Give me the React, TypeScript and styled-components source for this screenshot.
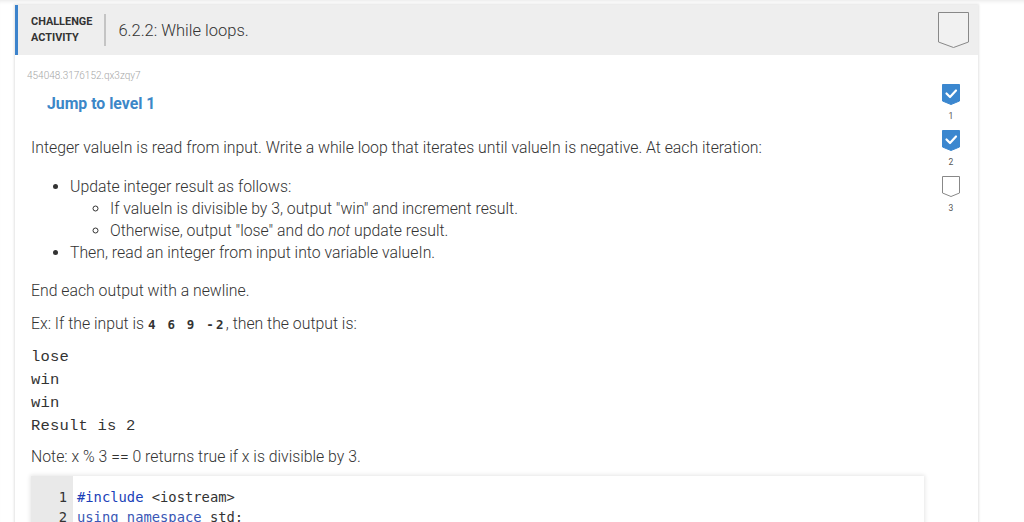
import React from "react";
import styled, { createGlobalStyle } from "styled-components";

const Global = createGlobalStyle`
  html, body { margin: 0; padding: 0; background: #fff; }
  body { font-family: Roboto, "Noto Sans", sans-serif; color: #333; overflow: hidden; }
`;

const Page = styled.div`
  width: 1024px;
  height: 522px;
  overflow: hidden;
  padding: 5px 0 0 15px;
  box-sizing: border-box;
  background: #fff;
  box-shadow: inset 0 4px 4px -3px #e6e6e6;
`;

const Card = styled.section`
  width: 963px;
  background: #fff;
  box-shadow: 0 0 2px 1px #e4e4e4;
`;

const Header = styled.header`
  display: flex;
  align-items: center;
  height: 50px;
  background: #eeeeee;
  border-left: 3px solid #3c83cc;
  padding: 0 9px 0 13px;
`;

const Kind = styled.div`
  font-family: Roboto, sans-serif;
  font-weight: 700;
  font-size: 10.9px;
  line-height: 16px;
  color: #333;
  padding-right: 12px;
  border-right: 2px solid #c4c4c4;
  height: 32px;
  display: flex;
  flex-direction: column;
  justify-content: center;
`;

const Title = styled.h1`
  margin: 0 0 0 12px;
  font-family: Roboto, sans-serif;
  font-weight: 300;
  font-size: 16.5px;
  color: #333;
  flex: 1;
`;

const Body = styled.div`
  display: flex;
`;

const Main = styled.div`
  flex: 1;
  padding: 15px 0 0 12px;
`;

const Sidebar = styled.div`
  width: 56px;
  display: flex;
  flex-direction: column;
  align-items: center;
  padding-top: 29px;
  gap: 8px;
`;

const Level = styled.div`
  display: flex;
  flex-direction: column;
  align-items: center;
  gap: 6px;
`;

const LevelNum = styled.span`
  font-size: 8.5px;
  color: #555;
  line-height: 11px;
`;

const Ident = styled.div`
  font-size: 10px;
  font-weight: 300;
  color: #a6a6a6;
  line-height: 12px;
`;

const Jump = styled.a`
  display: block;
  margin: 13px 0 0 20px;
  font-size: 15.8px;
  font-weight: 700;
  color: #3c87c8;
  line-height: 18px;
`;

const Content = styled.div`
  padding-left: 4px;
  margin-top: 24px;
  font-size: 15.8px;
  font-weight: 300;
  color: #333;
  line-height: 22px;
  width: 893px;
`;

const P = styled.p<{ mb?: number; mt?: number }>`
  margin: ${(p) => p.mt ?? 0}px 0 ${(p) => p.mb ?? 11}px;
`;

const List = styled.ul<{ sub?: boolean }>`
  margin: 0;
  padding-left: ${(p) => (p.sub ? 40 : 39)}px;
  list-style-type: ${(p) => (p.sub ? "circle" : "disc")};
`;

const Item = styled.li`
  line-height: 22px;
`;

const Code = styled.code`
  font-family: "DejaVu Sans Mono", monospace;
  font-weight: 700;
  font-size: 12.5px;
  letter-spacing: 2.2px;
  color: #333;
`;

const Pre = styled.pre`
  margin: 10px 0 8px;
  font-family: "Liberation Mono", "Courier New", monospace;
  font-size: 15.5px;
  line-height: 23px;
  letter-spacing: 0.2px;
  color: #333;
  font-weight: 400;
`;

const Editor = styled.div`
  display: flex;
  margin-top: 8px;
  height: 60px;
  box-shadow: 0 0 4px 1px #e6e6e6;
  font-family: "DejaVu Sans Mono", monospace;
  font-size: 13.8px;
  line-height: 20px;
`;

const Gutter = styled.div`
  width: 42px;
  background: #e9e9e9;
  color: #333;
  text-align: right;
  padding: 11px 6px 0 0;
  box-sizing: border-box;
`;

const Lines = styled.div`
  padding: 11px 0 0 4px;
  color: #333;
`;

const Kw = styled.span`
  color: #1a3fb8;
`;

const Blue = styled.span`
  color: #3a57b5;
`;

function Badge({ done, big }: { done?: boolean; big?: boolean }) {
  const w = big ? 31 : 18;
  const h = big ? 36 : 21;
  const notch = big ? 6 : 4;
  const pts = `0.5,0.5 ${w - 0.5},0.5 ${w - 0.5},${h - notch} ${w / 2},${h - 0.5} 0.5,${h - notch}`;
  return (
    <svg width={w} height={h} viewBox={`0 0 ${w} ${h}`}>
      <polygon
        points={pts}
        fill={done ? "#3b87cf" : big ? "#f1f1f1" : "#fff"}
        stroke={done ? "#3b87cf" : "#888"}
        strokeWidth={1}
      />
      {done && (
        <polyline
          points="4.5,9.5 8,13 14,6.5"
          fill="none"
          stroke="#fff"
          strokeWidth={2.2}
          strokeLinecap="round"
          strokeLinejoin="round"
        />
      )}
    </svg>
  );
}

export default function App() {
  return (
    <Page>
      <Global />
      <Card>
        <Header>
          <Kind>
            <span>CHALLENGE</span>
            <span>ACTIVITY</span>
          </Kind>
          <Title>6.2.2: While loops.</Title>
          <Badge big />
        </Header>
        <Body>
          <Main>
            <Ident>454048.3176152.qx3zqy7</Ident>
            <Jump>Jump to level 1</Jump>
            <Content>
              <P mb={17}>
                Integer valueIn is read from input. Write a while loop that iterates until valueIn is negative. At each iteration:
              </P>
              <List>
                <Item>
                  Update integer result as follows:
                  <List sub>
                    <Item>If valueIn is divisible by 3, output "win" and increment result.</Item>
                    <Item>
                      Otherwise, output "lose" and do <em>not</em> update result.
                    </Item>
                  </List>
                </Item>
                <Item>Then, read an integer from input into variable valueIn.</Item>
              </List>
              <P mt={16} mb={11}>End each output with a newline.</P>
              <P mb={0}>
                Ex: If the input is <Code>4 6 9 -2</Code>, then the output is:
              </P>
              <Pre>{"lose\nwin\nwin\nResult is 2"}</Pre>
              <P mb={0}>Note: x % 3 == 0 returns true if x is divisible by 3.</P>
              <Editor>
                <Gutter>
                  1<br />2
                </Gutter>
                <Lines>
                  <Kw>#include</Kw> &lt;iostream&gt;
                  <br />
                  <Blue>using namespace</Blue> std;
                </Lines>
              </Editor>
            </Content>
          </Main>
          <Sidebar>
            <Level>
              <Badge done />
              <LevelNum>1</LevelNum>
            </Level>
            <Level>
              <Badge done />
              <LevelNum>2</LevelNum>
            </Level>
            <Level>
              <Badge />
              <LevelNum>3</LevelNum>
            </Level>
          </Sidebar>
        </Body>
      </Card>
    </Page>
  );
}
